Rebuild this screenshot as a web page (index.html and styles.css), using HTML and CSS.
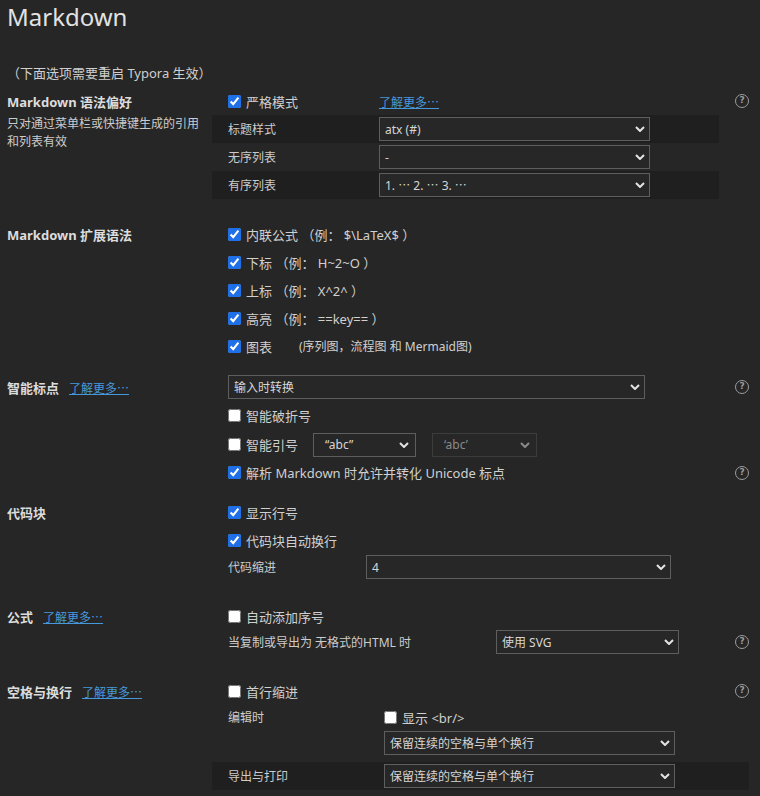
FILE: index.html
```html
<!DOCTYPE html>
<html lang="zh">
<head>
<meta charset="utf-8">
<title>Markdown</title>
<link rel="stylesheet" href="styles.css">
</head>
<body>
<h1 class="title">Markdown</h1>
<p class="note">（下面选项需要重启 Typora 生效）</p>

<section class="sec sec1">
  <div class="side">
    <div class="sec-title">Markdown 语法偏好</div>
    <div class="desc">只对通过菜单栏或快捷键生成的引用和列表有效</div>
  </div>
  <div class="main">
    <div class="row">
      <label class="check lw151"><input type="checkbox" checked>严格模式</label>
      <a class="link">了解更多⋯</a>
      <span class="help">?</span>
    </div>
    <div class="row shade">
      <span class="lbl lw151">标题样式</span>
      <div class="select w271"><span>atx (#)</span><svg class="chev" viewBox="0 0 10 6"><path d="M1 1l4 4 4-4"/></svg></div>
    </div>
    <div class="row shade-light">
      <span class="lbl lw151">无序列表</span>
      <div class="select w271"><span>-</span><svg class="chev" viewBox="0 0 10 6"><path d="M1 1l4 4 4-4"/></svg></div>
    </div>
    <div class="row shade">
      <span class="lbl lw151">有序列表</span>
      <div class="select w271"><span>1. ⋯ 2. ⋯ 3. ⋯</span><svg class="chev" viewBox="0 0 10 6"><path d="M1 1l4 4 4-4"/></svg></div>
    </div>
  </div>
</section>

<section class="sec sec2">
  <div class="side">
    <div class="sec-title">Markdown 扩展语法</div>
  </div>
  <div class="main">
    <div class="row"><label class="check"><input type="checkbox" checked>内联公式 （例： $\LaTeX$ ）</label></div>
    <div class="row"><label class="check"><input type="checkbox" checked>下标 （例： H~2~O ）</label></div>
    <div class="row"><label class="check"><input type="checkbox" checked>上标 （例： X^2^ ）</label></div>
    <div class="row"><label class="check"><input type="checkbox" checked>高亮 （例： ==key== ）</label></div>
    <div class="row"><label class="check"><input type="checkbox" checked>图表<span class="extra">(序列图，流程图 和 Mermaid图)</span></label></div>
  </div>
</section>

<section class="sec sec3">
  <div class="side">
    <div class="sec-title">智能标点<a class="link side-link">了解更多⋯</a></div>
  </div>
  <div class="main">
    <div class="row">
      <div class="select w417"><span>输入时转换</span><svg class="chev" viewBox="0 0 10 6"><path d="M1 1l4 4 4-4"/></svg></div>
      <span class="help">?</span>
    </div>
    <div class="row"><label class="check"><input type="checkbox">智能破折号</label></div>
    <div class="row h31">
      <label class="check lw85"><input type="checkbox">智能引号</label>
      <div class="select w103 pad11"><span>“abc”</span><svg class="chev" viewBox="0 0 10 6"><path d="M1 1l4 4 4-4"/></svg></div>
      <div class="select w105 pad11 disabled"><span>‘abc’</span><svg class="chev" viewBox="0 0 10 6"><path d="M1 1l4 4 4-4"/></svg></div>
    </div>
    <div class="row h25">
      <label class="check"><input type="checkbox" checked>解析 Markdown 时允许并转化 Unicode 标点</label>
      <span class="help">?</span>
    </div>
  </div>
</section>

<section class="sec sec4">
  <div class="side">
    <div class="sec-title">代码块</div>
  </div>
  <div class="main">
    <div class="row"><label class="check"><input type="checkbox" checked>显示行号</label></div>
    <div class="row"><label class="check"><input type="checkbox" checked>代码块自动换行</label></div>
    <div class="row h26">
      <span class="lbl lw138">代码缩进</span>
      <div class="select w305"><span>4</span><svg class="chev" viewBox="0 0 10 6"><path d="M1 1l4 4 4-4"/></svg></div>
    </div>
  </div>
</section>

<section class="sec sec5">
  <div class="side">
    <div class="sec-title">公式<a class="link side-link">了解更多⋯</a></div>
  </div>
  <div class="main">
    <div class="row"><label class="check"><input type="checkbox">自动添加序号</label></div>
    <div class="row h24">
      <span class="lbl lw268">当复制或导出为 无格式的HTML 时</span>
      <div class="select w183"><span>使用 SVG</span><svg class="chev" viewBox="0 0 10 6"><path d="M1 1l4 4 4-4"/></svg></div>
      <span class="help">?</span>
    </div>
  </div>
</section>

<section class="sec sec6">
  <div class="side">
    <div class="sec-title">空格与换行<a class="link side-link">了解更多⋯</a></div>
  </div>
  <div class="main">
    <div class="row">
      <label class="check"><input type="checkbox">首行缩进</label>
      <span class="help">?</span>
    </div>
    <div class="row h24">
      <span class="lbl lw156">编辑时</span>
      <label class="check"><input type="checkbox">显示 &lt;br/&gt;</label>
    </div>
    <div class="row">
      <span class="lw156"></span>
      <div class="select w291"><span>保留连续的空格与单个换行</span><svg class="chev" viewBox="0 0 10 6"><path d="M1 1l4 4 4-4"/></svg></div>
    </div>
    <div class="row shade-full">
      <span class="lbl lw156">导出与打印</span>
      <div class="select w291"><span>保留连续的空格与单个换行</span><svg class="chev" viewBox="0 0 10 6"><path d="M1 1l4 4 4-4"/></svg></div>
    </div>
  </div>
</section>
</body>
</html>
```

FILE: styles.css
```css
* { box-sizing: border-box; }
html, body { margin: 0; padding: 0; }
body {
  background: #262626;
  color: #d0d0d0;
  font-family: "Noto Sans", "Noto Sans CJK SC", sans-serif;
  font-size: 13px;
  width: 760px;
  height: 796px;
  overflow: hidden;
}
.title {
  font-size: 24px;
  font-weight: 400;
  line-height: 32px;
  margin: 1px 0 0 7px;
  color: #e2e2e2;
}
.note {
  font-size: 13px;
  line-height: 20px;
  margin: 30px 0 0 7px;
  color: #cfcfcf;
}
.sec { display: flex; }
.sec1 { margin-top: 4px; }
.sec2 { margin-top: 21px; }
.sec3 { margin-top: 13px; }
.sec4 { margin-top: 13px; }
.sec5 { margin-top: 22px; }
.sec6 { margin-top: 23px; }

.side {
  width: 212px;
  flex: none;
  padding: 0 8px 0 7px;
}
.sec-title {
  height: 28px;
  display: flex;
  align-items: center;
  font-weight: 700;
  color: #dcdcdc;
}
.desc {
  font-size: 12px;
  line-height: 18px;
  color: #cccccc;
}
.main {
  flex: 1;
  padding-right: 11px;
}
.row {
  display: flex;
  align-items: center;
  height: 28px;
  padding-left: 16px;
}
.h24 { height: 24px; }
.h25 { height: 25px; }
.h26 { height: 26px; }
.h31 { height: 31px; }
.shade { background: #1f1f1f; width: 507px; }
.shade-light { width: 507px; }
.shade-full { background: #1f1f1f; margin-top: 5px; }

.check {
  display: flex;
  align-items: center;
  gap: 5px;
  white-space: nowrap;
}
.check input {
  margin: 0;
  width: 13px;
  height: 13px;
  accent-color: #1f6fe6;
  flex: none;
}
.extra {
  font-size: 12px;
  margin-left: 22px;
}
.lbl {
  font-size: 12px;
  color: #cccccc;
  flex: none;
}
.lw85 { width: 85px; flex: none; }
.lw138 { width: 138px; }
.lw151 { width: 151px; flex: none; }
.lw156 { width: 156px; flex: none; }
.lw268 { width: 268px; }

.link {
  font-family: "Noto Sans CJK SC", sans-serif;
  font-size: 12px;
  color: #4598dc;
  text-decoration: underline;
  font-weight: 400;
}
.side-link { margin-left: 10px; }

.help {
  margin-left: auto;
  width: 14px;
  height: 14px;
  border: 1.5px solid #9c9c9c;
  border-radius: 50%;
  color: #9c9c9c;
  font-size: 9px;
  font-weight: 700;
  line-height: 11px;
  text-align: center;
  flex: none;
  font-family: "DejaVu Sans", sans-serif;
}

.select {
  height: 24px;
  border: 1px solid #5e5e5e;
  background: #272727;
  display: flex;
  align-items: center;
  justify-content: space-between;
  padding: 0 4px 0 5px;
  font-size: 12px;
  color: #d6d6d6;
  flex: none;
  white-space: nowrap;
}
.pad11 { padding-left: 11px; padding-right: 6px; }
.select.disabled { border-color: #3c3c3c; color: #8a8a8a; }
.select.disabled .chev { stroke: #8a8a8a; }
.w103 { width: 103px; }
.w105 { width: 105px; margin-left: 16px; }
.w183 { width: 183px; }
.w271 { width: 271px; }
.w291 { width: 291px; }
.w305 { width: 305px; }
.w417 { width: 417px; }
.chev {
  width: 10px;
  height: 6px;
  fill: none;
  stroke: #e4e4e4;
  stroke-width: 2;
}
```
